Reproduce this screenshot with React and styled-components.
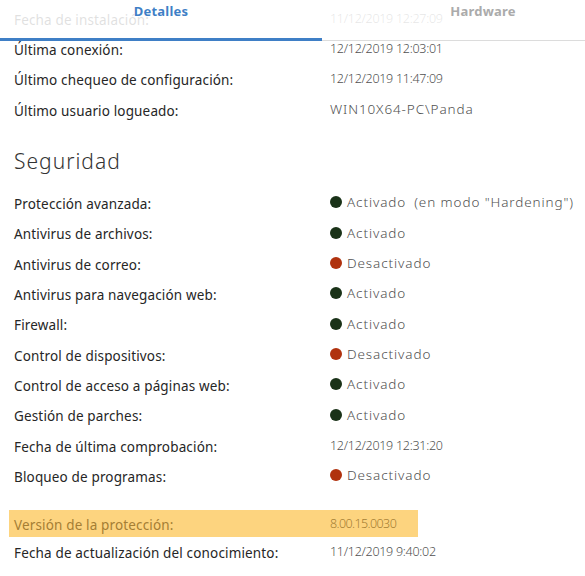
import React from 'react';
import styled, { createGlobalStyle } from 'styled-components';

const GlobalStyle = createGlobalStyle`
  html, body {
    margin: 0;
    padding: 0;
    background: #ffffff;
  }
`;

const Page = styled.div`
  position: relative;
  width: 585px;
  height: 576px;
  overflow: hidden;
  background: #ffffff;
  font-family: 'Noto Sans', 'Open Sans', sans-serif;
`;

const TabBar = styled.div`
  position: absolute;
  top: 0;
  left: 0;
  display: flex;
  background: rgba(255, 255, 255, 0.86);
  z-index: 2;
`;

const Tab = styled.div`
  box-sizing: border-box;
  width: 322px;
  height: 41px;
  padding-top: 3px;
  text-align: center;
  font-size: 13px;
  line-height: 16px;
  font-weight: 700;
  letter-spacing: 0.2px;
  color: ${(p) => (p.$active ? '#3f7fc6' : '#ababab')};
  border-bottom: ${(p) => (p.$active ? '3px solid #3f7fc6' : '1px solid #dcdcdc')};
`;

const Content = styled.div`
  padding: 3px 0 0 9px;
  display: flex;
  flex-direction: column;
`;

const Row = styled.div`
  display: grid;
  grid-template-columns: 316px auto;
  align-items: center;
  width: 409px;
  box-sizing: border-box;
  height: ${(p) => (p.$highlight ? '27px' : '30.33px')};
  margin-top: ${(p) => (p.$highlight ? '19px' : '0')};
  padding-left: 5px;
  background: ${(p) => (p.$highlight ? '#fdd47f' : 'transparent')};
`;

const Label = styled.span`
  font-size: 13.5px;
  letter-spacing: 0.15px;
  color: ${(p) => (p.$highlight ? '#a57e34' : '#262626')};
  white-space: nowrap;
  padding-top: 3px;
`;

const Value = styled.span`
  display: flex;
  align-items: center;
  gap: 5px;
  font-size: ${(p) => (p.$text ? '13.5px' : '12.5px')};
  letter-spacing: ${(p) => (p.$text ? '0.9px' : p.$tight ? '-0.6px' : '-0.28px')};
  font-weight: 300;
  color: ${(p) => (p.$highlight ? '#a57e34' : '#505050')};
  white-space: nowrap;
`;

const Dot = styled.span`
  width: 12px;
  height: 12px;
  border-radius: 50%;
  flex: none;
  background: ${(p) => (p.$on ? '#1a3218' : '#b0320e')};
`;

const Note = styled.span`
  margin-left: 3px;
`;

const Heading = styled.h2`
  margin: 22px 0 11px 5px;
  font-size: 21px;
  line-height: 30px;
  font-weight: 300;
  letter-spacing: 1px;
  color: #333333;
`;

const general = [
  ['Fecha de instalación:', '11/12/2019 12:27:09'],
  ['Última conexión:', '12/12/2019 12:03:01'],
  ['Último chequeo de configuración:', '12/12/2019 11:47:09'],
  ['Último usuario logueado:', 'WIN10X64-PC\\Panda', true],
];

const security = [
  ['Protección avanzada:', true, '(en modo "Hardening")'],
  ['Antivirus de archivos:', true],
  ['Antivirus de correo:', false],
  ['Antivirus para navegación web:', true],
  ['Firewall:', true],
  ['Control de dispositivos:', false],
  ['Control de acceso a páginas web:', true],
  ['Gestión de parches:', true],
  ['Fecha de última comprobación:', '12/12/2019 12:31:20'],
  ['Bloqueo de programas:', false],
];

function Status({ on, note }) {
  return (
    <Value $text>
      <Dot $on={on} />
      {on ? 'Activado' : 'Desactivado'}
      {note && <Note>{note}</Note>}
    </Value>
  );
}

export default function App() {
  return (
    <>
      <GlobalStyle />
      <Page>
        <TabBar>
          <Tab $active>Detalles</Tab>
          <Tab>Hardware</Tab>
        </TabBar>
        <Content>
          {general.map(([label, value, isText]) => (
            <Row key={label}>
              <Label>{label}</Label>
              <Value $text={isText}>{value}</Value>
            </Row>
          ))}
          <Heading>Seguridad</Heading>
          {security.map(([label, value, note]) => (
            <Row key={label}>
              <Label>{label}</Label>
              {typeof value === 'string' ? <Value>{value}</Value> : <Status on={value} note={note} />}
            </Row>
          ))}
          <Row $highlight>
            <Label $highlight>Versión de la protección:</Label>
            <Value $highlight $tight>8.00.15.0030</Value>
          </Row>
          <Row>
            <Label>Fecha de actualización del conocimiento:</Label>
            <Value>11/12/2019 9:40:02</Value>
          </Row>
        </Content>
      </Page>
    </>
  );
}
